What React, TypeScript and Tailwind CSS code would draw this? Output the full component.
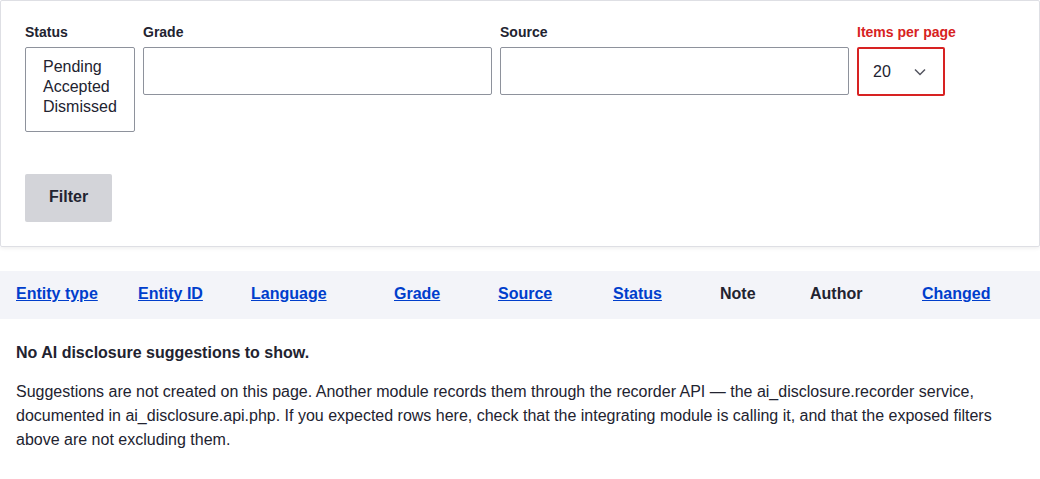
const cols = [
  { label: "Entity type", link: true, w: "w-[122px]" },
  { label: "Entity ID", link: true, w: "w-[113px]" },
  { label: "Language", link: true, w: "w-[143px]" },
  { label: "Grade", link: true, w: "w-[104px]" },
  { label: "Source", link: true, w: "w-[115px]" },
  { label: "Status", link: true, w: "w-[107px]" },
  { label: "Note", link: false, w: "w-[90px]" },
  { label: "Author", link: false, w: "w-[112px]" },
  { label: "Changed", link: true, w: "flex-1" },
];

const App = () => {
  return (
    <div className="min-h-[479px] bg-white font-['Liberation_Sans',Arial,sans-serif] text-[#222330]">
      {/* exposed filters */}
      <div className="w-[1040px] rounded-[2px] border border-[#dedfe4] px-6 pt-[22px] pb-6 shadow-[0_1px_4px_rgba(0,0,0,0.08)]">
        <div className="flex items-start gap-x-2">
          <div className="flex flex-col gap-y-[6px]">
            <label className="text-[14px] leading-[18px] font-bold">Status</label>
            <div className="flex h-[85px] w-[110px] flex-col rounded-[2px] border border-[#8e929c] px-[17px] pt-[9px] pb-[7px] text-[16px] leading-[20px]">
              <span>Pending</span>
              <span>Accepted</span>
              <span>Dismissed</span>
            </div>
          </div>
          <div className="flex flex-col gap-y-[6px]">
            <label className="text-[14px] leading-[18px] font-bold">Grade</label>
            <input
              type="text"
              className="h-[48px] w-[349px] rounded-[2px] border border-[#8e929c] px-4 text-[16px] outline-none"
            />
          </div>
          <div className="flex flex-col gap-y-[6px]">
            <label className="text-[14px] leading-[18px] font-bold">Source</label>
            <input
              type="text"
              className="h-[48px] w-[349px] rounded-[2px] border border-[#8e929c] px-4 text-[16px] outline-none"
            />
          </div>
          <div className="flex flex-col gap-y-[6px]">
            <label className="text-[14px] leading-[18px] font-bold text-[#d72222]">
              Items per page
            </label>
            <div className="flex h-[49px] w-[88px] items-center justify-between rounded-[2px] border-2 border-[#d72222] pr-[17px] pl-[14px] text-[16px]">
              <span>20</span>
              <svg width="12" height="8" viewBox="0 0 12 8" fill="none">
                <path d="M1 1.5l5 5 5-5" stroke="#545560" strokeWidth="1.5" />
              </svg>
            </div>
          </div>
        </div>
        <button className="mt-[42px] h-[48px] rounded-[2px] bg-[#d3d4d9] px-6 pb-[2px] text-[16px] font-bold text-[#222330]">
          Filter
        </button>
      </div>

      {/* table */}
      <div className="mt-[24px] flex h-[48px] items-center bg-[#f3f4f9] px-4 pb-[2px] text-[16px] font-bold">
        {cols.map((c) => (
          <div key={c.label} className={c.w}>
            {c.link ? (
              <a href="#" className="text-[#003ecc] underline">
                {c.label}
              </a>
            ) : (
              <span>{c.label}</span>
            )}
          </div>
        ))}
      </div>

      <div className="px-4 pt-[24px] text-[16px]">
        <p className="leading-[20px] font-bold">No AI disclosure suggestions to show.</p>
        <p className="mt-[17px] leading-[24px]">
          Suggestions are not created on this page. Another module records them
          through the recorder API — the ai_disclosure.recorder service,
          documented in ai_disclosure.api.php. If you expected rows here, check
          that the integrating module is calling it, and that the exposed
          filters above are not excluding them.
        </p>
      </div>
    </div>
  );
};

export default App;
